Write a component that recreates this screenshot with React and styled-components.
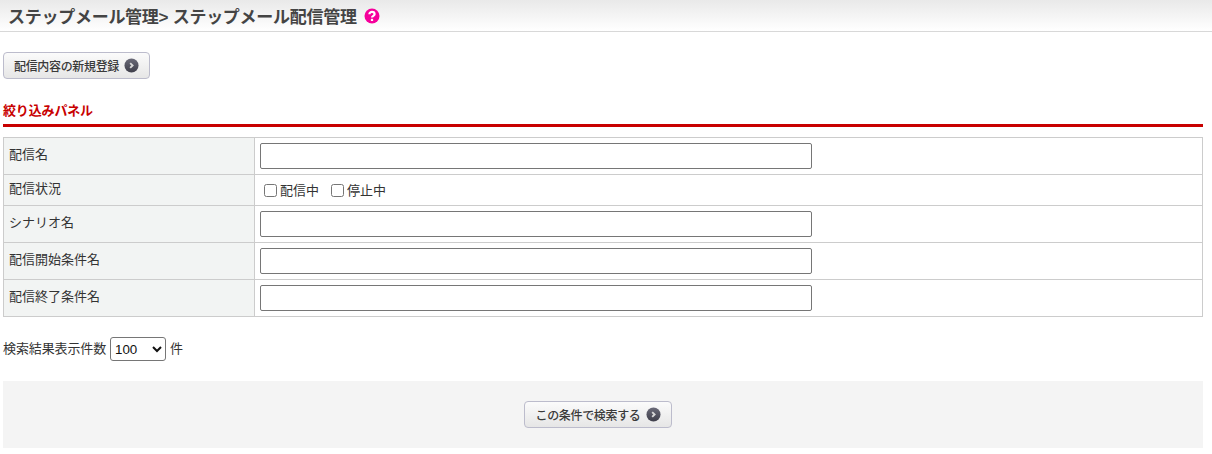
import React from 'react'
import styled, { createGlobalStyle } from 'styled-components'

const Global = createGlobalStyle`
  html, body { margin: 0; padding: 0; background: #fff; }
  body {
    font-family: "Liberation Sans", Arial, "Noto Sans CJK JP", sans-serif;
    font-size: 13px;
    color: #333;
  }
`

const rows = [
  { label: '配信名', kind: 'input' },
  { label: '配信状況', kind: 'check' },
  { label: 'シナリオ名', kind: 'input' },
  { label: '配信開始条件名', kind: 'input' },
  { label: '配信終了条件名', kind: 'input' },
]

function Arrow() {
  return (
    <ArrowIcon viewBox="0 0 16 16">
      <defs>
        <linearGradient id="arrowFill" x1="0" y1="0" x2="0" y2="1">
          <stop offset="0" stopColor="#6a6a78" />
          <stop offset="1" stopColor="#3e3e4a" />
        </linearGradient>
      </defs>
      <circle cx="8" cy="8" r="7.5" fill="url(#arrowFill)" />
      <path d="M6.6 5.4 L9.2 8 L6.6 10.6" fill="none" stroke="#d8d8d8" strokeWidth="2" />
    </ArrowIcon>
  )
}

function App() {
  return (
    <Page>
      <Global />
      <Header>
        <Title>ステップメール管理&gt; ステップメール配信管理</Title>
        <HelpIcon viewBox="0 0 16 16">
          <circle cx="8" cy="8" r="7.5" fill="#f5009b" />
          <path d="M5.4 6.2 C5.4 3.2 10.6 3.2 10.6 6.2 C10.6 7.9 8 7.8 8 9.6" fill="none" stroke="#fff" strokeWidth="2.2" />
          <rect x="6.9" y="10.8" width="2.2" height="2.2" fill="#fff" />
        </HelpIcon>
      </Header>
      <Content>
        <ActionButton type="button" $width={147}>配信内容の新規登録<Arrow /></ActionButton>
        <PanelTitle>絞り込みパネル</PanelTitle>
        <FilterTable>
          <tbody>
            {rows.map((row) => (
              <tr key={row.label}>
                <LabelCell $compact={row.kind === 'check'}>{row.label}</LabelCell>
                <ValueCell>
                  {row.kind === 'input' ? (
                    <TextInput type="text" />
                  ) : (
                    <CheckRow>
                      <CheckLabel><Check type="checkbox" />配信中</CheckLabel>
                      <CheckLabel><Check type="checkbox" />停止中</CheckLabel>
                    </CheckRow>
                  )}
                </ValueCell>
              </tr>
            ))}
          </tbody>
        </FilterTable>
        <CountRow>
          <CountText>検索結果表示件数</CountText>
          <CountSelect defaultValue="100">
            <option>50</option>
            <option>100</option>
            <option>200</option>
          </CountSelect>
          <CountText>件</CountText>
        </CountRow>
        <SearchBar>
          <ActionButton type="button" $width={148}>この条件で検索する<Arrow /></ActionButton>
        </SearchBar>
      </Content>
    </Page>
  )
}

const Page = styled.div`
  width: 1212px;
  height: 454px;
  overflow: hidden;
`

const Header = styled.div`
  height: 31px;
  border-bottom: 1px solid #d8d8d8;
  background: linear-gradient(#e9e9e9, #ffffff);
  display: flex;
  align-items: center;
  padding-left: 8px;
`

const Title = styled.h1`
  margin: 0;
  font-size: 17px;
  font-weight: bold;
  color: #444;
  letter-spacing: -0.27px;
`

const HelpIcon = styled.svg`
  width: 16px;
  height: 16px;
  margin-left: 7px;
`

const Content = styled.div`
  padding: 20px 9px 0 3px;
`

const ActionButton = styled.button`
  display: flex;
  align-items: center;
  justify-content: center;
  gap: 5px;
  width: ${(p) => p.$width}px;
  height: 27px;
  padding: 0;
  border: 1px solid #bcbccc;
  border-radius: 4px;
  background: linear-gradient(#fbfbfb, #e6e6e6);
  font-family: inherit;
  font-size: 12px;
  font-weight: 500;
  letter-spacing: -0.33px;
  color: #3a3a3a;
`

const ArrowIcon = styled.svg`
  width: 15px;
  height: 15px;
  flex: none;
`

const PanelTitle = styled.h2`
  margin: 23px 0 0;
  height: 22px;
  font-size: 13px;
  line-height: 18px;
  font-weight: bold;
  color: #c80000;
  letter-spacing: -0.15px;
  border-bottom: 3px solid #c80000;
`

const FilterTable = styled.table`
  width: 1200px;
  margin-top: 10px;
  border-collapse: collapse;
  table-layout: fixed;
`

const LabelCell = styled.th`
  box-sizing: border-box;
  width: 251px;
  height: ${(p) => (p.$compact ? 31 : 37)}px;
  padding: ${(p) => (p.$compact ? '3px' : '0')} 5px ${(p) => (p.$compact ? '0' : '5px')};
  border: 1px solid #ccc;
  background: #f2f4f3;
  font-weight: normal;
  font-size: 13px;
  text-align: left;
  vertical-align: ${(p) => (p.$compact ? 'top' : 'middle')};
  color: #333;
`

const ValueCell = styled.td`
  padding: 0 5px;
  border: 1px solid #ccc;
  vertical-align: middle;
`

const TextInput = styled.input`
  display: block;
  box-sizing: border-box;
  width: 552px;
  height: 26px;
  padding: 1px 2px;
  border: 1px solid #767676;
  border-radius: 2px;
  background: #fff;
`

const CheckRow = styled.div`
  display: flex;
  gap: 12px;
  padding: 1px 0 0 4px;
`

const CheckLabel = styled.label`
  display: flex;
  align-items: center;
  gap: 3px;
  font-size: 13px;
  line-height: 18px;
`

const Check = styled.input`
  width: 13px;
  height: 13px;
  margin: 0;
`

const CountRow = styled.div`
  display: flex;
  align-items: center;
  gap: 4px;
  margin-top: 20px;
  height: 24px;
  font-size: 13px;
  color: #333;
`

const CountText = styled.span`
  padding-bottom: 3px;
  letter-spacing: -0.12px;
`

const CountSelect = styled.select`
  box-sizing: border-box;
  width: 56px;
  height: 24px;
  padding-left: 0;
  border: 1px solid #767676;
  border-radius: 3px;
  background-color: #fff;
  font-family: "Liberation Sans", Arial, sans-serif;
  font-size: 13.33px;
  color: #111;
`

const SearchBar = styled.div`
  box-sizing: border-box;
  display: flex;
  justify-content: center;
  align-items: center;
  width: 1200px;
  height: 67px;
  margin-top: 20px;
  padding-right: 10px;
  background: #f4f4f4;
`

export default App
